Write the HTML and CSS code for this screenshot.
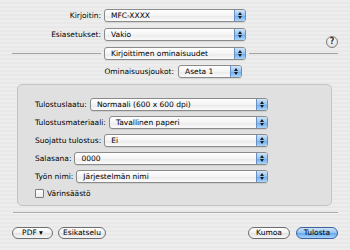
FILE: index.html
```html
<!DOCTYPE html>
<html lang="fi">
<head>
    <meta charset="utf-8">
    <title>Tulosta</title>
    <link rel="stylesheet" href="styles.css">
</head>
<body>
    <div class="dialog">
        <div class="row r1">
            <span class="lbl">Kirjoitin:</span>
            <div class="popup top-pop"><span class="val">MFC-XXXX</span><span class="arr"></span></div>
        </div>
        <div class="row">
            <span class="lbl">Esiasetukset:</span>
            <div class="popup top-pop"><span class="val">Vakio</span><span class="arr"></span></div>
            <button class="help">?</button>
        </div>
        <div class="row sep-row">
            <span class="line"></span>
            <div class="popup top-pop"><span class="val">Kirjoittimen ominaisuudet</span><span class="arr"></span></div>
            <span class="line"></span>
        </div>
        <div class="row">
            <span class="lbl wide">Ominaisuusjoukot:</span>
            <div class="popup set-pop"><span class="val">Aseta 1</span><span class="arr"></span></div>
        </div>

        <div class="group">
            <div class="grow">
                <span class="glbl">Tulostuslaatu:</span>
                <div class="popup"><span class="val">Normaali (600 x 600 dpi)</span><span class="arr"></span></div>
            </div>
            <div class="grow">
                <span class="glbl">Tulostusmateriaali:</span>
                <div class="popup"><span class="val">Tavallinen paperi</span><span class="arr"></span></div>
            </div>
            <div class="grow">
                <span class="glbl">Suojattu tulostus:</span>
                <div class="popup"><span class="val">Ei</span><span class="arr"></span></div>
            </div>
            <div class="grow">
                <span class="glbl">Salasana:</span>
                <div class="popup"><span class="val">0000</span><span class="arr"></span></div>
            </div>
            <div class="grow">
                <span class="glbl">Työn nimi:</span>
                <div class="popup"><span class="val">Järjestelmän nimi</span><span class="arr"></span></div>
            </div>
            <label class="check"><span class="box"></span>Värinsäästö</label>
        </div>

        <div class="divider"></div>

        <div class="buttons">
            <button class="pill pdf">PDF &#9662;</button>
            <button class="pill preview">Esikatselu</button>
            <span class="spacer"></span>
            <button class="pill cancel">Kumoa</button>
            <button class="pill default">Tulosta</button>
        </div>
    </div>
</body>
</html>
```

FILE: styles.css
```css
html, body {
    margin: 0;
    padding: 0;
}

body {
    width: 350px;
    height: 250px;
    overflow: hidden;
    background-color: #ebebeb;
    background-image: repeating-linear-gradient(#ededed 0, #ededed 2px, #e8e8e8 2px, #e8e8e8 4px);
    font-family: "DejaVu Sans", "Liberation Sans", sans-serif;
    font-size: 7.5px;
    color: #000;
}

.dialog {
    display: flex;
    flex-direction: column;
}

/* top rows */
.row {
    display: flex;
    align-items: center;
    height: 13px;
    margin-top: 6px;
}

.row.r1 {
    margin-top: 9px;
}

.row + .row + .row + .row {
    margin-top: 5px;
}

.lbl {
    width: 101px;
    margin-right: 3px;
    text-align: right;
    white-space: nowrap;
}

.lbl.wide {
    width: 174px;
    margin-right: 4px;
}

.sep-row {
    padding: 0 12px;
}

.line {
    flex: 1;
    height: 1px;
    background: #a3a3a3;
}

.sep-row .popup {
    margin: 0 3px;
}

/* popup buttons */
.popup {
    display: flex;
    align-items: stretch;
    box-sizing: border-box;
    height: 13px;
    border: 1px solid #8a8a8a;
    border-radius: 3px;
    background: linear-gradient(#ffffff, #f4f4f4 50%, #e9e9e9 51%, #fbfbfb);
    box-shadow: 0 1px 0 rgba(0, 0, 0, 0.08);
    overflow: hidden;
}

.top-pop {
    width: 142px;
}

.set-pop {
    width: 64px;
}

.val {
    flex: 1;
    padding-left: 6px;
    line-height: 11px;
    white-space: nowrap;
    overflow: hidden;
}

.arr {
    width: 10px;
    display: flex;
    flex-direction: column;
    align-items: center;
    justify-content: center;
    gap: 1px;
    border-left: 1px solid #6a8fc2;
    background: linear-gradient(#cfe5fb, #93c3f0 50%, #6aaaf0 51%, #a9d6fd);
}

.arr::before,
.arr::after {
    content: "";
    width: 0;
    height: 0;
    border-left: 2px solid transparent;
    border-right: 2px solid transparent;
}

.arr::before {
    border-bottom: 3px solid #1a1a1a;
}

.arr::after {
    border-top: 3px solid #1a1a1a;
}

.help {
    box-sizing: border-box;
    width: 12px;
    height: 12px;
    padding: 0;
    margin-left: auto;
    margin-right: 12px;
    align-self: flex-end;
    margin-bottom: -7px;
    border: 1px solid #7d7d7d;
    border-radius: 50%;
    background: radial-gradient(circle at 50% 30%, #ffffff, #e4e4e4 70%, #cfcfcf);
    font-family: "DejaVu Sans", sans-serif;
    font-size: 8px;
    font-weight: bold;
    line-height: 10px;
    color: #333;
}

/* grouped options */
.group {
    margin: 6px 18px 0 17px;
    padding: 13px 0 7px 17px;
    border: 1px solid #c4c4c4;
    border-radius: 5px;
    background: #e0e0e0;
    display: flex;
    flex-direction: column;
    gap: 5px;
}

.grow {
    display: flex;
    align-items: center;
    width: 233px;
    height: 13px;
}

.glbl {
    margin-right: 3px;
    white-space: nowrap;
}

.grow .popup {
    flex: 1;
}

.check {
    display: flex;
    align-items: center;
    height: 10px;
}

.box {
    box-sizing: border-box;
    width: 9px;
    height: 9px;
    margin-right: 3px;
    border: 1px solid #7a7a7a;
    border-radius: 1px;
    background: linear-gradient(#ffffff, #ececec);
}

.divider {
    margin: 6px 12px 0 13px;
    height: 1px;
    background: #ababab;
    border-bottom: 1px solid #f6f6f6;
}

/* bottom buttons */
.buttons {
    display: flex;
    align-items: center;
    margin-top: 13px;
    padding: 0 12px;
}

.pill {
    box-sizing: border-box;
    height: 12px;
    padding: 0;
    border: 1px solid #6e6e6e;
    border-radius: 7px;
    background: linear-gradient(#ffffff, #f1f1f1 50%, #e2e2e2 51%, #f7f7f7);
    font-family: "DejaVu Sans", sans-serif;
    font-size: 7.5px;
    line-height: 10px;
    color: #000;
}

.pdf {
    width: 41px;
}

.preview {
    width: 48px;
    margin-left: 5px;
}

.spacer {
    flex: 1;
}

.cancel {
    width: 42px;
}

.default {
    width: 42px;
    margin-left: 6px;
    border-color: #3d6199;
    background: linear-gradient(#cde4fb, #93c3f0 50%, #64a6ec 51%, #a8d5fd);
}
```
